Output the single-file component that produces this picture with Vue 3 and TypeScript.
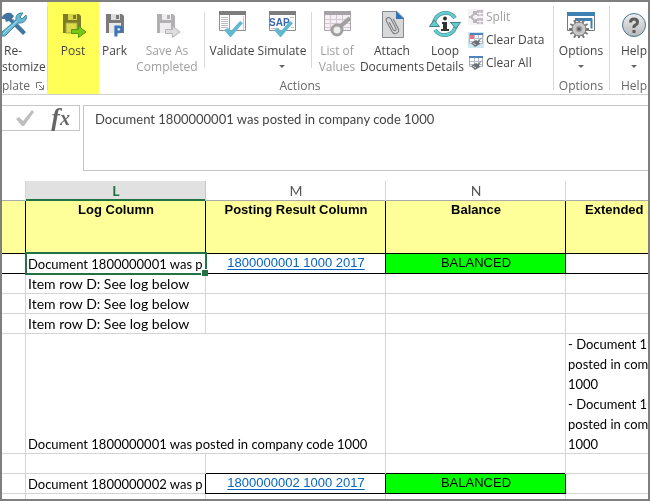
<script setup lang="ts">
import { ref } from 'vue'

const formula = ref('Document 1800000001 was posted in company code 1000')
const extended = ['- Document 1', 'posted in com', '1000', '- Document 1', 'posted in com', '1000']
const logRows = ['Item row D: See log below', 'Item row D: See log below', 'Item row D: See log below']
const teeth = Array.from({ length: 12 }, (_, i) => i * 30)
</script>

<template>
  <main class="window">
    <div class="ribbon">
      <section class="group template">
        <button class="tool left">
          <svg class="icon" width="28" height="28" viewBox="0 0 28 28">
            <path d="M0 7 Q3 2 9 3 L12 6 L10 9 L24 22 L21 25 L7 11 L4 12 L3 9 L0 9Z" fill="#43769f" />
            <path d="M11 9 L22 20" stroke="#8da7bb" stroke-width="1" />
            <path d="M0 22 L14 10 Q13 4 19 3 L21 3 L18 7 L20 9 L24 5 Q26 11 19 13 L16 13 L3 26 L0 26Z" fill="#69b9d2" stroke="#3c86a3" stroke-width="1" />
            <path d="M1 24 L15 11" stroke="#a9dcea" stroke-width="1" />
          </svg>
          <span class="caption"><span class="indent">Re-</span><br>stomize</span>
        </button>
        <div class="label launch">
          plate
          <svg width="8" height="8" viewBox="0 0 8 8" fill="none" stroke="#777"><path d="M.5 6V.5H6M3 3l4 4M7.500 3v4.500H3" /></svg>
        </div>
      </section>

      <section class="group actions">
        <button class="tool post">
          <svg class="icon multiply" width="28" height="28" viewBox="0 0 28 28">
            <path d="M4 4H20L22 6V23H4Z" fill="#7b7b7b" />
            <path d="M9 4H18V10H9Z" fill="#d6d6d6" /><path d="M14 5h3v4h-3z" fill="#7b7b7b" />
            <path d="M7 13H18V23H7Z" fill="#dcdcdc" stroke="#a8a8a8" />
            <path d="M12.500 19.500H19.500V16L27 22L19.500 27.500V23.500H12.500Z" fill="#79c640" stroke="#4f9a28" />
          </svg>
          <span class="caption">Post</span>
        </button>
        <div class="strip">
          <button class="tool park">
            <svg class="icon" width="28" height="28" viewBox="0 0 28 28">
              <path d="M5 4H21L23 6V23H5Z" fill="#7b7b7b" />
              <path d="M10 4H19V10H10Z" fill="#ddd" /><path d="M15 5h3v4h-3z" fill="#7b7b7b" />
              <path d="M8 13H20V23H8Z" fill="#e8e8e8" />
              <text x="13" y="26" font-family="Liberation Sans, sans-serif" font-size="14" font-weight="700" fill="#3f74b0" stroke="#3f74b0">P</text>
            </svg>
            <span class="caption">Park</span>
          </button>
          <button class="tool save" disabled>
            <svg class="icon" width="28" height="28" viewBox="0 0 28 28">
              <path d="M4 4H20L22 6V23H4Z" fill="#b2b0b2" />
              <path d="M9 4H18V10H9Z" fill="#eee" /><path d="M14 5h3v4h-3z" fill="#b2b0b2" />
              <path d="M7 13H18V23H7Z" fill="#eeecee" />
              <path d="M12.500 19.500H19.500V16L27 22L19.500 27.500V23.500H12.500Z" fill="#dedcde" stroke="#b5b3b5" />
            </svg>
            <span class="caption">Save As<br>Completed</span>
          </button>
          <i class="divider"></i>
          <button class="tool validate">
            <svg class="icon" width="28" height="28" viewBox="0 0 28 28">
              <path d="M1.500 1.500H27.500V20.500H1.500Z" fill="#fff" stroke="#8c8c8c" /><path d="M1 1H28V5H1Z" fill="#7d7d7d" />
              <path d="M3 7.500h7M3 9.500h7M3 11.500h7M3 13.500h7M3 15.500h7M3 17.500h7" stroke="#bcbcbc" />
              <path d="M11.500 5V20" stroke="#9c9c9c" /><path d="M25.500 6V20" stroke="#ccc" />
              <path d="M6 20L10 18L13 21L22 11L25 13L13 27H12Z" fill="#62b7d1" />
            </svg>
            <span class="caption">Validate</span>
          </button>
          <button class="tool simulate">
            <svg class="icon" width="28" height="28" viewBox="0 0 28 28">
              <path d="M1.500 1.500H27.500V20.500H1.500Z" fill="#fff" stroke="#8c8c8c" /><path d="M1 1H28V5H1Z" fill="#7d7d7d" />
              <path d="M3 18.500h8M22 7.500h4M23 17.500h3" stroke="#c4c4c4" />
              <text x="1" y="16" font-family="Liberation Sans, sans-serif" font-size="10" font-weight="700" fill="#3a67ad">SAP</text>
              <path d="M6 20L10 18L13 21L22 11L25 13L13 27H12Z" fill="#62b7d1" />
            </svg>
            <span class="caption">Simulate</span>
            <i class="arrow"></i>
          </button>
          <i class="divider simulate-end"></i>
          <button class="tool list" disabled>
            <svg class="icon" width="28" height="28" viewBox="0 0 28 28">
              <path d="M1.500 1.500H27.500V20.500H1.500Z" fill="#f6eef5" stroke="#a9a6a9" /><path d="M1 1H28V5H1Z" fill="#a5a2a5" />
              <path d="M2 9.500H27M2 13.500H27M2 17.500H27M7.500 5V20M13.500 5V20M19.500 5V20" stroke="#d3cad2" />
              <circle cx="14" cy="20" r="5" fill="#eee" stroke="#a19fa1" stroke-width="3" /><path d="M18 16L27 8" stroke="#a19fa1" stroke-width="4" />
            </svg>
            <span class="caption">List of<br>Values</span>
          </button>
          <button class="tool attach">
            <svg class="icon" width="28" height="28" viewBox="0 0 28 28">
              <path d="M4.500 1.500H19L25.500 8V27.500H4.500Z" fill="#d6d8da" stroke="#858b91" />
              <path d="M18 1L26 9H18Z" fill="#2f74b5" />
              <g fill="none" stroke="#777" stroke-width="1" stroke-linecap="round" transform="rotate(-28 15 15)">
                <path d="M18 10V20Q18 24 14.500 24T11 20V9Q11 6 13.500 6T16 9V19Q16 21 14.500 21T13 19V11" />
              </g>
            </svg>
            <span class="caption">Attach<br>Documents</span>
          </button>
          <button class="tool loop">
            <svg class="icon" width="32" height="28" viewBox="0 0 32 28">
              <g fill="none" stroke="#477f86" stroke-width="4"><path d="M5 14A11.500 11.500 0 0 1 26 8" /><path d="M27 14A11.500 11.500 0 0 1 6 20" /></g>
              <g fill="none" stroke="#61cdd0" stroke-width="3"><path d="M5 14A11.500 11.500 0 0 1 26 8" /><path d="M27 14A11.500 11.500 0 0 1 6 20" /></g>
              <path d="M.5 16.500L5 10L10.500 16.500Z" fill="#61cdd0" stroke="#477f86" /><path d="M21.500 12.500H31.500L27 18.500Z" fill="#61cdd0" stroke="#477f86" />
              <circle cx="16" cy="8.500" r="2" fill="#333" /><path d="M13 12H18V19H20V21H12V19H14V14H13Z" fill="#333" />
            </svg>
            <span class="caption">Loop<br>Details</span>
          </button>
          <div class="stack">
            <button class="mini" disabled>
              <svg width="16" height="16" viewBox="0 0 16 16">
                <path d="M0 0H16V16H0Z" fill="#f5f1f5" /><path d="M1 8H3L7 4M3 8L7 12M5 3L8 3V6M5 13H8V10" fill="none" stroke="#bab5ba" stroke-width="2" />
                <path d="M9 1h6v6H9zM9 9h6v6H9z" fill="#c4bfc4" /><path d="M9 4.500h6M9 12.500h6M12 3v4M12 11v4" stroke="#f3eff3" />
              </svg>Split
            </button>
            <button class="mini">
              <svg width="16" height="16" viewBox="0 0 16 16">
                <path d="M0 0H16V16H0Z" fill="#cdeaf0" /><path d="M1.500 1.500H14.500V11.500H1.500Z" fill="#fff" stroke="#b0b6bd" /><path d="M2 1h13v2H2z" fill="#5282bd" />
                <path d="M2 6.500h12M2 9.500h12M6.500 3v8M10.500 3v8" stroke="#b9c2cc" /><path d="M2 3h4v4H2z" fill="#e77482" />
                <path d="M14 5L11 10L12 12L7 15L3 11L8 8L10 9Z" fill="#6b6f75" /><path d="M5 11L8 13" stroke="#ddd" />
              </svg>Clear Data
            </button>
            <button class="mini">
              <svg width="16" height="16" viewBox="0 0 16 16">
                <path d="M1.500 1.500H14.500V11.500H1.500Z" fill="#fff" stroke="#a9afb6" /><path d="M1 1h14v2H1z" fill="#5282bd" />
                <path d="M2 6.500h12M2 9.500h12M6.500 3v8M10.500 3v8" stroke="#b3bbc5" />
                <path d="M14 5L11 10L12 12L7 15L3 11L8 8L10 9Z" fill="#6b6f75" /><path d="M5 11L8 13" stroke="#ddd" />
              </svg>Clear All
            </button>
          </div>
        </div>
        <div class="label">Actions</div>
      </section>

      <section class="group options">
        <button class="tool">
          <svg class="icon" width="28" height="28" viewBox="0 0 28 28">
            <path d="M.5 2.500H27.500V20.500H.5Z" fill="#fff" stroke="#777" /><path d="M0 2H28V6H0Z" fill="#3d82b3" />
            <path d="M9 9.500H24.500V18.500" fill="none" stroke="#3d82b3" stroke-width="2" /><path d="M8 8h17v3H8z" fill="#3d82b3" />
            <g fill="#777"><path v-for="a in teeth" :key="a" d="M11 9H13V13H11Z" :transform="`rotate(${a} 12 19)`" /></g>
            <circle cx="12" cy="19" r="7" fill="#c8c8c8" stroke="#777" /><circle cx="12" cy="19" r="3" fill="#888" stroke="#aaa" /><circle cx="12" cy="19" r="1" fill="#444" />
          </svg>
          <span class="caption">Options</span>
          <i class="arrow"></i>
        </button>
        <div class="label">Options</div>
      </section>

      <section class="group help">
        <button class="tool">
          <svg class="icon" width="28" height="28" viewBox="0 0 28 28">
            <defs><linearGradient id="disc" x2="0" y2="1"><stop stop-color="#eee" /><stop offset="1" stop-color="#b9b9b9" /></linearGradient></defs>
            <circle cx="14" cy="15" r="11.500" fill="url(#disc)" stroke="#4b7795" />
            <path d="M10.500 12.500Q10.500 9 14 9T17.500 12Q17.500 14 15.500 15T14 18" fill="none" stroke="#5c5c5c" stroke-width="3" /><path d="M12.500 20h3v3h-3z" fill="#5c5c5c" />
          </svg>
          <span class="caption">Help</span>
          <i class="arrow"></i>
        </button>
        <div class="label">Help</div>
      </section>
    </div>

    <div class="formula-bar">
      <div class="entry">
        <button aria-label="Enter">
          <svg width="20" height="18" viewBox="0 0 20 18"><path d="M1 10L4 8L8 12L17 1L19 3L9 17H7Z" fill="#bebebe" /></svg>
        </button>
        <button class="fx" aria-label="Insert function"><span>f</span><small>x</small></button>
      </div>
      <textarea v-model="formula" aria-label="Formula" spellcheck="false"></textarea>
    </div>

    <table>
      <colgroup><col class="edge"><col class="wide"><col class="wide"><col class="wide"><col></colgroup>
      <thead>
        <tr class="letters"><th></th><th class="active">L</th><th>M</th><th>N</th><th></th></tr>
        <tr class="titles"><th></th><th>Log Column</th><th>Posting Result Column</th><th>Balance</th><th class="cut">Extended</th></tr>
      </thead>
      <tbody>
        <tr class="ruled">
          <td></td>
          <td class="selected">Document 1800000001 was p</td>
          <td class="arial"><a href="#">1800000001 1000 2017</a></td>
          <td class="arial balanced">BALANCED</td>
          <td class="last"></td>
        </tr>
        <tr v-for="(row, i) in logRows" :key="i"><td></td><td class="item">{{ row }}</td><td></td><td></td><td></td></tr>
        <tr class="tall">
          <td></td>
          <td colspan="2">Document 1800000001 was posted in company code 1000</td>
          <td></td>
          <td><div v-for="(line, i) in extended" :key="i">{{ line }}</div></td>
        </tr>
        <tr><td></td><td></td><td class="under"></td><td class="under"></td><td></td></tr>
        <tr>
          <td></td>
          <td class="right-rule">Document 1800000002 was p</td>
          <td class="arial right-rule under"><a href="#">1800000002 1000 2017</a></td>
          <td class="arial balanced right-rule under">BALANCED</td>
          <td></td>
        </tr>
        <tr class="rest"><td></td><td></td><td></td><td></td><td></td></tr>
      </tbody>
    </table>
  </main>
</template>

<style>
body { margin: 0; }
</style>

<style scoped>
* { box-sizing: border-box; }
.window {
  min-height: 100vh;
  border: 2px solid #7f7f7f;
  overflow: hidden;
  background: #fff;
  font-family: Lato, "Liberation Sans", sans-serif;
}
button {
  margin: 0;
  padding: 0;
  border: 0;
  background: none;
  font: inherit;
  color: inherit;
}
.ribbon {
  display: flex;
  border-bottom: 1px solid #cfcfcf;
  font: 12px/16px "Open Sans", "Noto Sans", sans-serif;
  color: #444;
}
.group {
  display: grid;
  grid-template-rows: 75px 17px;
  position: relative;
}
.group + .group::before {
  content: "";
  width: 1px;
  position: absolute;
  top: 4px;
  bottom: 4px;
  left: 0;
  background: #d8d8d8;
}
.template { width: 45px; }
.actions { grid-template-columns: 52px 1fr; width: 506px; }
.options { width: 56px; }
.help { flex: 1; min-width: 0; grid-template-columns: 50px; overflow: hidden; }
.label { grid-row: 2; grid-column: 1 / -1; text-align: center; color: #666; line-height: 18px; }
.launch { display: flex; align-items: center; justify-content: space-between; padding-right: 3px; }
.tool {
  display: flex;
  flex-direction: column;
  align-items: center;
  padding-top: 8px;
  text-align: center;
  white-space: nowrap;
}
.icon { display: block; flex: none; margin-bottom: 5px; }
.tool:disabled, .mini:disabled { color: #a0a0a0; }
.left { align-items: flex-start; text-align: left; }
.indent { padding-left: 2px; }
.post { grid-row: 1 / 3; grid-column: 1; background: #ffff57; }
.multiply { mix-blend-mode: multiply; }
.strip { display: flex; align-items: flex-start; grid-row: 1; grid-column: 2; }
.park { width: 31px; }
.save { width: 74px; }
.validate, .simulate { width: 50px; }
.divider { width: 1px; height: 56px; margin: 10px 2px 0 0; background: #d8d8d8; }
.simulate-end { margin: 10px 0 0 4px; }
.list { width: 50px; }
.attach { width: 60px; }
.loop { width: 46px; }
.arrow {
  margin-top: 6px;
  border: 3px solid transparent;
  border-top-color: #666;
  border-bottom: 0;
}
.stack { padding-top: 3px; }
.mini { display: flex; align-items: center; gap: 2px; height: 23px; white-space: nowrap; }
.formula-bar { display: flex; align-items: flex-start; gap: 3px; padding: 10px 0; }
.entry {
  display: flex;
  align-items: center;
  justify-content: space-between;
  width: 78px;
  height: 26px;
  padding: 0 9px 0 13px;
  border: 1px solid #c6c6c6;
  border-left: 0;
}
.entry button { display: flex; align-items: center; }
.entry .fx { font: italic bold 26px/24px "Liberation Serif", serif; color: #666; }
.fx small { font-size: 20px; }
textarea {
  display: block;
  flex: 1;
  min-width: 0;
  height: 66px;
  margin: 0;
  padding: 3px 11px;
  border: 1px solid #c6c6c6;
  border-right: 0;
  outline: 0;
  resize: none;
  font: 13px/20px Lato, sans-serif;
  color: #444;
}
table { width: 100%; table-layout: fixed; border-spacing: 0; font-size: 13px; line-height: 20px; color: #000; }
.edge { width: 24px; }
.wide { width: 180px; }
th, td {
  --right: #d4d4d4;
  --bottom: #d4d4d4;
  height: 20px;
  padding: 0 2px;
  overflow: hidden;
  white-space: nowrap;
  text-align: left;
  vertical-align: bottom;
  box-shadow: inset -1px 0 var(--right), inset 0 -1px var(--bottom);
}
th:last-child, td:last-child { --right: transparent; }
.item { font-size: 14px; }
.letters th { --bottom: #ababab; font-size: 14px; font-weight: 400; text-align: center; color: #555; }
.letters .active { background: #e1e1e1; color: #217346; font-weight: 700; box-shadow: inset -1px 0 #c6c6c6, inset 0 -2px #217346; }
.titles th {
  --right: #000;
  --bottom: #000;
  height: 53px;
  background: #ffff99;
  font: bold 13px/18px "Liberation Sans", sans-serif;
  text-align: center;
  vertical-align: top;
}
.titles .cut { --right: transparent; padding-left: 19px; text-align: left; }
.ruled td { --right: #000; --bottom: #000; }
.ruled .last { --right: transparent; }
.selected { position: relative; overflow: visible; }
.selected::before {
  content: "";
  position: absolute;
  inset: -2px -1px -1px;
  border: 2px solid #217346;
}
.selected::after {
  content: "";
  position: absolute;
  right: -2px;
  bottom: -2px;
  width: 6px;
  height: 6px;
  border: 1px solid #fff;
  border-width: 1px 0 0 1px;
  background: #217346;
}
.arial { font-family: "Liberation Sans", sans-serif; font-size: 13px; line-height: 18px; text-align: center; vertical-align: top; }
.balanced { background: #0f0; }
.right-rule { --right: #000; }
.under { --bottom: #000; }
a { color: #0563c1; text-underline-offset: 2px; }
.tall td { height: 120px; }
.rest td { --bottom: transparent; height: 5px; line-height: 5px; }
</style>
